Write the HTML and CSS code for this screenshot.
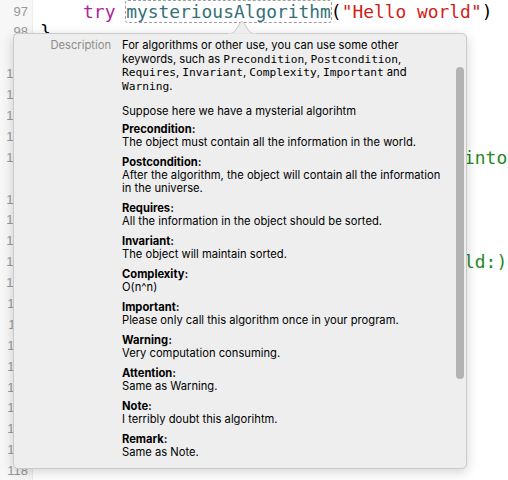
FILE: index.html
```html
<!DOCTYPE html>
<html>
<head>
<meta charset="utf-8">
<link rel="stylesheet" href="styles.css">
</head>
<body>
<div class="editor">
  <div class="gutter">
    <div class="ln">97</div><div class="ln">98</div><div class="ln">99</div><div class="ln">100</div>
    <div class="ln">101</div><div class="ln">102</div><div class="ln">103</div><div class="ln">104</div>
    <div class="ln"></div><div class="ln">105</div><div class="ln">106</div><div class="ln">107</div>
    <div class="ln">108</div><div class="ln">109</div><div class="ln">110</div><div class="ln">111</div>
    <div class="ln">112</div><div class="ln">113</div><div class="ln">114</div><div class="ln">115</div>
    <div class="ln">116</div><div class="ln">117</div><div class="ln">118</div>
  </div>
  <div class="code">
    <div class="row">    <span class="kw">try</span> <span class="fn">mysteriousAlgorithm</span>(<span class="str">"Hello world"</span>)</div>
    <div class="row">}</div>
    <div class="row"></div>
    <div class="row"><span class="cm">/// Example</span></div>
    <div class="row">func demo() {</div>
    <div class="row">    let x = 1</div>
    <div class="row"></div>
    <div class="row shift"><span class="cm">    // Run the algorithm and turn them into</span></div>
    <div class="row"><span class="cm">    // a world.</span></div>
    <div class="row">    print(x)</div>
    <div class="row"></div>
    <div class="row"></div>
    <div class="row shift"><span class="cm">    // Same as: mysteriousAlgorithm(world:)</span></div>
    <div class="row"></div>
    <div class="row">}</div>
    <div class="row"></div>
    <div class="row"></div>
    <div class="row"></div>
    <div class="row"></div>
    <div class="row"></div>
    <div class="row"></div>
    <div class="row"></div>
    <div class="row"></div>
  </div>
</div>

<div class="popover">
  <svg class="arrow" width="28" height="14" viewBox="0 0 28 14">
    <path d="M0 13.5 L3 13.5 Q5 13.5 7 11 L12.5 2.5 Q14 0.5 15.5 2.5 L21 11 Q23 13.5 25 13.5 L28 13.5" fill="#eeeeee" stroke="#c9c9c9" stroke-width="1"/>
    <rect x="0" y="13.5" width="28" height="1" fill="#eeeeee"/>
  </svg>
  <div class="content">
    <div class="label">Description</div>
    <div class="body">
      <p class="intro">For algorithms or other use, you can use some other<br>keywords, such as <code>Precondition</code>, <code>Postcondition</code>,<br><code>Requires</code>, <code>Invariant</code>, <code>Complexity</code>, <code>Important</code> and<br><code>Warning</code>.</p>
      <p class="lead">Suppose here we have a mysterial algorihtm</p>
      <div class="sec"><b>Precondition:</b><span>The object must contain all the information in the world.</span></div>
      <div class="sec"><b>Postcondition:</b><span>After the algorithm, the object will contain all the information<br>in the universe.</span></div>
      <div class="sec"><b>Requires:</b><span>All the information in the object should be sorted.</span></div>
      <div class="sec"><b>Invariant:</b><span>The object will maintain sorted.</span></div>
      <div class="sec"><b>Complexity:</b><span>O(n^n)</span></div>
      <div class="sec"><b>Important:</b><span>Please only call this algorithm once in your program.</span></div>
      <div class="sec"><b>Warning:</b><span>Very computation consuming.</span></div>
      <div class="sec"><b>Attention:</b><span>Same as Warning.</span></div>
      <div class="sec"><b>Note:</b><span>I terribly doubt this algorihtm.</span></div>
      <div class="sec"><b>Remark:</b><span>Same as Note.</span></div>
    </div>
  </div>
  <div class="scroll-thumb"></div>
</div>
</body>
</html>
```

FILE: styles.css
```css
html, body {
  margin: 0;
  padding: 0;
}
body {
  width: 508px;
  height: 480px;
  overflow: hidden;
  background: #ffffff;
  position: relative;
}
.editor {
  display: flex;
  height: 480px;
  overflow: hidden;
}
.gutter {
  width: 33px;
  flex: none;
  background: #f7f7f7;
  border-right: 1px solid #ececec;
  padding-top: 1.5px;
  box-sizing: border-box;
}
.ln {
  height: 20.9px;
  line-height: 20.9px;
  text-align: right;
  padding-right: 4px;
  font-family: "Liberation Sans", Arial, sans-serif;
  font-size: 13px;
  color: #999999;
}
.code {
  flex: none;
  padding-top: 1.5px;
  padding-left: 7px;
  font-family: "DejaVu Sans Mono", monospace;
  font-size: 17.9px;
  color: #000000;
}
.row {
  height: 20.9px;
  line-height: 20.9px;
  white-space: pre;
}
.row.shift {
  padding-left: 4px;
}
.kw { color: #b0249a; }
.fn {
  color: #357078;
  outline: 1px dashed #a0a0a0;
  outline-offset: 0px;
  border-radius: 2px;
}
.str { color: #cf2218; }
.cm { color: #238a23; }

.popover {
  position: absolute;
  left: 13px;
  top: 33px;
  width: 454px;
  height: 436px;
  box-sizing: border-box;
  background: #eeeeee;
  border: 1px solid #cacaca;
  border-radius: 5px;
  box-shadow: 0 3px 12px rgba(0, 0, 0, 0.18);
}
.arrow {
  position: absolute;
  left: 214px;
  top: -14px;
  display: block;
}
.content {
  display: grid;
  grid-template-columns: 97px 1fr;
  column-gap: 11px;
  padding-top: 5px;
  font-family: "Inter", "Liberation Sans", sans-serif;
  font-size: 11.2px;
  color: #000000;
}
.label {
  text-align: right;
  color: #8c8c8c;
  line-height: 13.6px;
}
.body p {
  margin: 0;
}
.intro {
  line-height: 13.6px;
  margin-bottom: 12px !important;
}
.intro code {
  font-family: "DejaVu Sans Mono", monospace;
  font-size: 11.2px;
  line-height: 10px;
}
.lead {
  line-height: 13px;
}
.sec {
  display: flex;
  flex-direction: column;
  line-height: 13px;
  margin-top: 7px;
}
.lead + .sec {
  margin-top: 5px;
}
.sec b {
  font-weight: 700;
}
.scroll-thumb {
  position: absolute;
  right: 2px;
  top: 33px;
  width: 8px;
  height: 312px;
  border-radius: 4px;
  background: #b3b3b3;
}
```
